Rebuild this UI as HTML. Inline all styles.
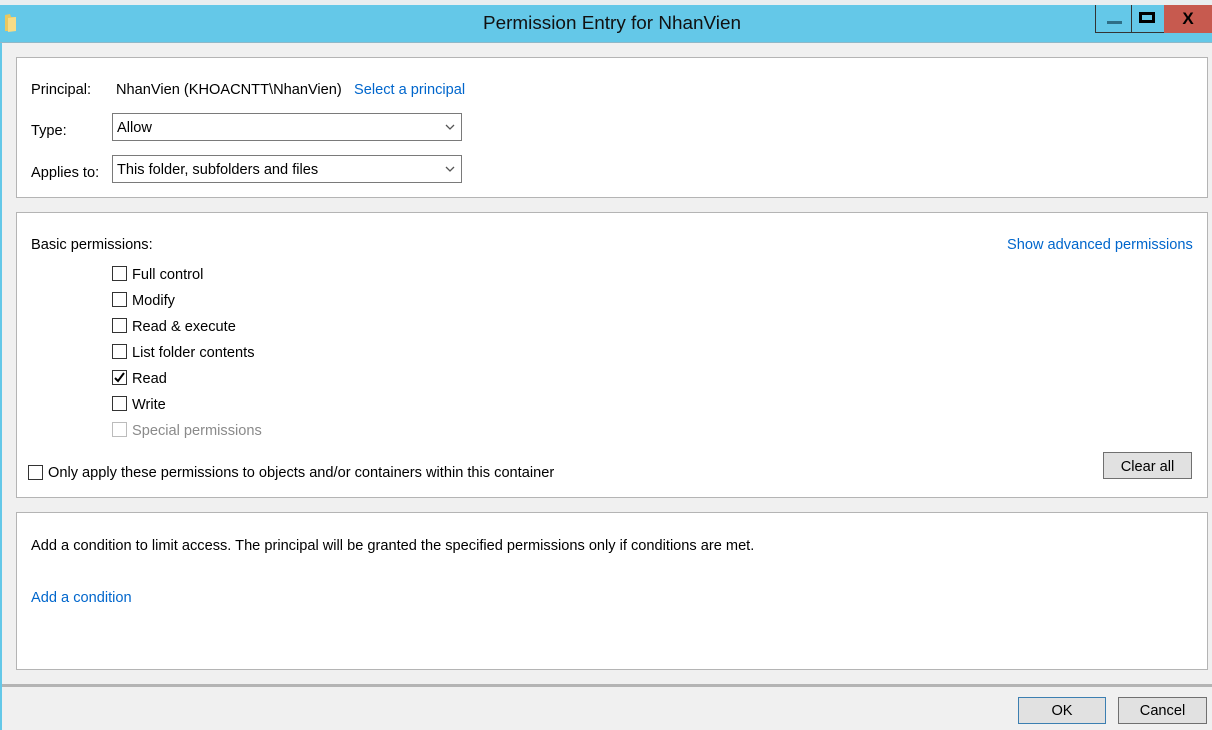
<!DOCTYPE html>
<html><head><meta charset="utf-8"><style>
*{margin:0;padding:0;box-sizing:border-box}
body{width:1212px;height:730px;overflow:hidden;background:#f0f0f0;font-family:"Liberation Sans",sans-serif;font-size:14.6px;color:#000;position:relative}
.a{position:absolute;white-space:nowrap}
.panel{position:absolute;left:16px;width:1192px;background:#fff;border:1px solid #b4b4b4}
.link{color:#0066cc}
.cb{position:absolute;width:15px;height:15px;border:1px solid #333;background:#fff}
.sel{position:absolute;left:112px;width:350px;height:28px;border:1px solid #7a7a7a;background:#fff}
.sel span{position:absolute;left:4px;top:6px}
.sel svg{position:absolute;right:6px;top:10px}
.btn{position:absolute;height:27px;background:#e1e1e1;border:1px solid #707070;text-align:center;line-height:25px}
</style></head><body>
<div class="a" style="left:0;top:0;width:1212px;height:5px;background:#e9eef0"></div>
<div class="a" style="left:0;top:5px;width:1212px;height:38px;background:#64c8e8"></div>
<div class="a" style="left:0;top:42px;width:1212px;height:1px;background:#8fb8c8"></div>
<div class="a" style="left:0;top:43px;width:2px;height:687px;background:#64c8e8"></div>
<svg class="a" style="left:4px;top:13px" width="16" height="20" viewBox="0 0 16 20"><path d="M1 2 L6 1 L7 4 L12 4 L12 18 L1 18Z" fill="#e8c860"/><path d="M4 5 L12 4 L12 18 L4 19Z" fill="#f6dc86"/></svg>
<div class="a" style="left:0;top:13px;width:1224px;text-align:center;font-size:18.9px;color:#111">Permission Entry for NhanVien</div>
<div class="a" style="left:1095px;top:5px;width:37px;height:28px;border:1px solid #333;border-top:none"><div class="a" style="left:11px;top:16px;width:15px;height:3px;background:#2e6e86"></div></div>
<div class="a" style="left:1131px;top:5px;width:34px;height:28px;border:1px solid #333;border-top:none;border-left:none"><div class="a" style="left:8px;top:7px;width:16px;height:11px;border:3px solid #000"></div></div>
<div class="a" style="left:1164px;top:5px;width:48px;height:28px;background:#c75a4f;color:#000;font-weight:bold;font-size:17px;text-align:center;line-height:28px">X</div>

<div class="panel" style="top:57px;height:141px"></div>
<div class="a" style="left:31px;top:82px">Principal:</div>
<div class="a" style="left:116px;top:82px">NhanVien (KHOACNTT\NhanVien)</div>
<div class="a link" style="left:354px;top:82px">Select a principal</div>
<div class="a" style="left:31px;top:123px">Type:</div>
<div class="sel" style="top:113px"><span>Allow</span><svg width="10" height="7"><path d="M1 1 L5 5 L9 1" fill="none" stroke="#555" stroke-width="1.3"/></svg></div>
<div class="a" style="left:31px;top:165px">Applies to:</div>
<div class="sel" style="top:155px"><span>This folder, subfolders and files</span><svg width="10" height="7"><path d="M1 1 L5 5 L9 1" fill="none" stroke="#555" stroke-width="1.3"/></svg></div>

<div class="panel" style="top:212px;height:286px"></div>
<div class="a" style="left:31px;top:237px">Basic permissions:</div>
<div class="a link" style="left:1007px;top:237px">Show advanced permissions</div>
<div class="cb" style="left:112px;top:266px"></div><div class="a" style="left:132px;top:267px">Full control</div>
<div class="cb" style="left:112px;top:292px"></div><div class="a" style="left:132px;top:293px">Modify</div>
<div class="cb" style="left:112px;top:318px"></div><div class="a" style="left:132px;top:319px">Read &amp; execute</div>
<div class="cb" style="left:112px;top:344px"></div><div class="a" style="left:132px;top:345px">List folder contents</div>
<div class="cb" style="left:112px;top:370px"><svg width="13" height="13" style="position:absolute;left:0;top:0"><path d="M2 7 L5 10 L11 2" fill="none" stroke="#000" stroke-width="2"/></svg></div><div class="a" style="left:132px;top:371px">Read</div>
<div class="cb" style="left:112px;top:396px"></div><div class="a" style="left:132px;top:397px">Write</div>
<div class="cb" style="left:112px;top:422px;border-color:#bcbcbc"></div><div class="a" style="left:132px;top:423px;color:#8a8a8a">Special permissions</div>
<div class="cb" style="left:28px;top:465px"></div><div class="a" style="left:48px;top:465px">Only apply these permissions to objects and/or containers within this container</div>
<div class="btn" style="left:1103px;top:452px;width:89px;line-height:28px">Clear all</div>

<div class="panel" style="top:512px;height:158px"></div>
<div class="a" style="left:31px;top:538px">Add a condition to limit access. The principal will be granted the specified permissions only if conditions are met.</div>
<div class="a link" style="left:31px;top:590px">Add a condition</div>

<div class="a" style="left:2px;top:684px;width:1210px;height:3px;background:#b4b4b4"></div>
<div class="btn" style="left:1018px;top:697px;width:88px;border-color:#3c7fb1;line-height:27px">OK</div>
<div class="btn" style="left:1118px;top:697px;width:89px;line-height:27px">Cancel</div>
</body></html>
